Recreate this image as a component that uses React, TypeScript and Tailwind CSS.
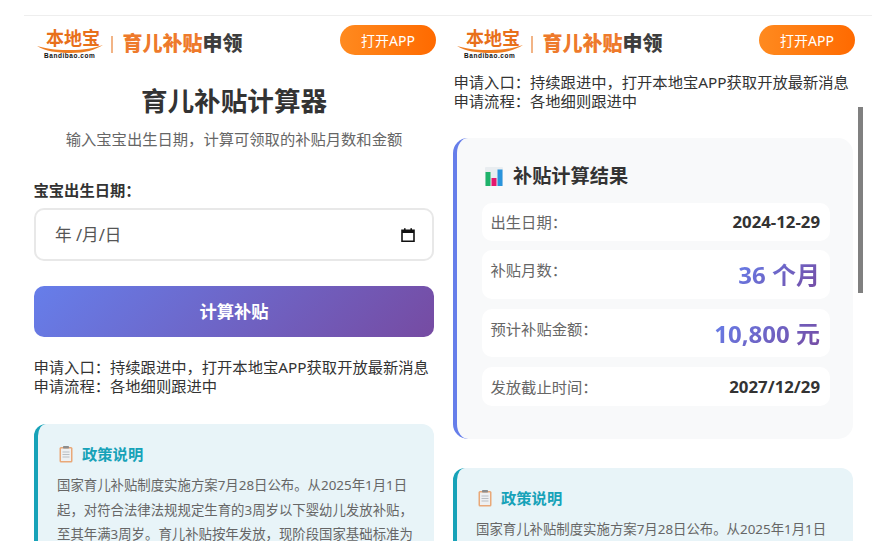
function Logo() {
  return (
    <div className="flex items-center">
      <div className="relative w-[68px] h-[36px] shrink-0">
        <div className="absolute left-[9px] top-[1px] text-[18px] leading-[26px] font-bold text-[#e8701a] whitespace-nowrap font-['Liberation_Serif','Noto_Sans_CJK_SC',serif]">
          本地宝
        </div>
        <svg className="absolute left-0 top-[14px]" width="68" height="16" viewBox="0 0 68 16">
          <path d="M0 7 C14 11 22 11 34 11 C46 11 58 9 66 6 C58 11 48 14 34 14 C20 14 8 12 0 7 Z" fill="#ee7d22" />
        </svg>
        <div className="absolute left-[7px] top-[27px] text-[6.5px] leading-[8px] font-bold text-[#111] tracking-[0.55px] whitespace-nowrap font-['Liberation_Sans',sans-serif]">
          Bandibao.com
        </div>
      </div>
      <div className="w-[1.5px] h-[17px] bg-[#f2b486] ml-[6px] mr-[10px] mt-[2px]" />
      <div className="text-[20px] leading-[26px] font-black whitespace-nowrap mt-[1px]">
        <span className="text-[#ee7a2b]">育儿补贴</span>
        <span className="text-[#3d3d3d]">申领</span>
      </div>
    </div>
  );
}

function Header() {
  return (
    <div className="flex items-center justify-between h-[50px] pl-[13px] pr-[8px] pt-[4px]">
      <Logo />
      <div className="flex items-center justify-center w-[96px] h-[30px] -mt-[6px] rounded-full bg-[linear-gradient(90deg,#ff8a1f,#ff6a00)] text-white text-[14px]">
        打开APP
      </div>
    </div>
  );
}

function Info() {
  return (
    <div className="text-[15.3px] leading-[19px] text-[#333] whitespace-nowrap -ml-[0.5px]">
      <div>申请入口：持续跟进中，打开本地宝APP获取开放最新消息</div>
      <div>申请流程：各地细则跟进中</div>
    </div>
  );
}

function ClipIcon() {
  return (
    <svg width="14" height="17" viewBox="0 0 14 17" className="shrink-0">
      <rect x="0.5" y="1" width="13" height="15.5" rx="1.5" fill="#e9a878" />
      <rect x="2" y="2.5" width="10" height="12.5" fill="#eef0f2" />
      <rect x="4" y="0" width="6" height="2.5" rx="0.7" fill="#8d8d8d" />
      <path d="M3.5 6h7M3.5 8.5h7M3.5 11h7" stroke="#b9bec4" strokeWidth="1" />
    </svg>
  );
}

function ChartIcon() {
  return (
    <svg width="18" height="19" viewBox="0 0 18 19" className="shrink-0">
      <rect x="0" y="0" width="18" height="19" rx="1" fill="#e9edf0" />
      <rect x="0.5" y="5" width="5" height="14" fill="#1fb36b" />
      <rect x="6.5" y="11" width="5" height="8" fill="#e5176e" />
      <rect x="12.5" y="2.5" width="5" height="16.5" fill="#2a94dc" />
    </svg>
  );
}

function Policy({ lines }: { lines: string[] }) {
  return (
    <div className="bg-[#e8f4f8] border-l-4 border-[#17a2b8] rounded-[12px] pl-[19px] pr-[16px] pt-[19px] pb-[16px]">
      <div className="flex items-center gap-[9px] h-[22px] pl-[2px]">
        <ClipIcon />
        <div className="text-[15.3px] font-bold text-[#17a2b8]">政策说明</div>
      </div>
      <div className="mt-[8px] text-[13.4px] leading-[24.6px] text-[#666] whitespace-nowrap">
        {lines.map((l) => (
          <div key={l}>{l}</div>
        ))}
      </div>
    </div>
  );
}

function Row({ label, value, big, h }: { label: string; value: string; big?: boolean; h: string }) {
  return (
    <div className={`flex justify-between bg-white rounded-[10px] pl-[9px] pr-[10px] ${h} ${big ? "items-start pt-[9px]" : "items-center"}`}>
      <span className={`text-[15.3px] leading-[20px] text-[#666] -ml-[0.5px] ${big ? "mt-[1px]" : ""}`}>{label}</span>
      {big ? (
        <span className="text-[24px] leading-[32px] font-bold bg-[linear-gradient(135deg,#667eea,#764ba2)] bg-clip-text text-transparent">
          {value}
        </span>
      ) : (
        <span className="text-[16.8px] leading-[22px] font-bold text-[#333]">{value}</span>
      )}
    </div>
  );
}

export default function App() {
  return (
    <div className="relative h-[541px] w-[896px] overflow-hidden bg-white font-['Noto_Sans','Noto_Sans_CJK_SC',sans-serif]">
      <div className="h-[16px]" />
      <div className="mx-[24px] h-[1px] bg-[#eeeeee] -mt-[1px]" />
      <div className="flex ml-[24px] w-[839px]">
        <div className="w-[420px] shrink-0">
          <Header />
          <div className="pl-[10px] pr-[10px]">
            <h1 className="text-center text-[26.6px] leading-[36px] font-bold text-[#333] mt-[17px]">育儿补贴计算器</h1>
            <p className="text-center text-[15.3px] leading-[20px] text-[#666] mt-[10px]">输入宝宝出生日期，计算可领取的补贴月数和金额</p>
            <div className="text-[15.3px] leading-[20px] font-bold text-[#333] mt-[31px] -ml-[0.5px]">宝宝出生日期：</div>
            <div className="flex items-center justify-between h-[53px] mt-[8px] border-2 border-[#e8e8e8] rounded-[10px] pl-[19px] pr-[16px]">
              <span className="text-[16.6px] text-[#555] pt-[2px]">年 /月/日</span>
              <svg width="16" height="16" viewBox="0 0 16 16">
                <path d="M2 3.2h12v11H2z" fill="none" stroke="#111" strokeWidth="1.6" />
                <path d="M2 3h12v3H2zM4 1.3h1.6V3H4zM10.4 1.3H12V3h-1.6z" fill="#111" />
              </svg>
            </div>
            <div className="flex items-center justify-center h-[51px] mt-[25px] rounded-[10px] bg-[linear-gradient(135deg,#667eea,#764ba2)] text-white text-[17.3px] font-bold">
              计算补贴
            </div>
            <div className="mt-[21px]">
              <Info />
            </div>
            <div className="mt-[28px]">
              <Policy
                lines={[
                  "国家育儿补贴制度实施方案7月28日公布。从2025年1月1日",
                  "起，对符合法律法规规定生育的3周岁以下婴幼儿发放补贴，",
                  "至其年满3周岁。育儿补贴按年发放，现阶段国家基础标准为",
                ]}
              />
            </div>
          </div>
        </div>
        <div className="w-[419px] shrink-0">
          <Header />
          <div className="pl-[9px] pr-[10px] mt-[7px]">
            <div className="pl-[1px]">
              <Info />
            </div>
            <div className="mt-[27px] bg-[#f8f9fa] border-l-4 border-[#667eea] rounded-[15px] pl-[25px] pr-[23px] pt-[25px] pb-[33px] h-[301px]">
              <div className="flex items-center gap-[10px] h-[26px] pl-[3px]">
                <ChartIcon />
                <div className="text-[19.2px] font-bold text-[#333]">补贴计算结果</div>
              </div>
              <div className="flex flex-col mt-[14px]">
                <Row h="h-[38px]" label="出生日期：" value="2024-12-29" />
                <div className="h-[9px]" />
                <Row h="h-[49px]" label="补贴月数：" value="36 个月" big />
                <div className="h-[10px]" />
                <Row h="h-[48px]" label="预计补贴金额：" value="10,800 元" big />
                <div className="h-[10px]" />
                <Row h="h-[39px]" label="发放截止时间：" value="2027/12/29" />
              </div>
            </div>
            <div className="mt-[29px]">
              <Policy lines={["国家育儿补贴制度实施方案7月28日公布。从2025年1月1日"]} />
            </div>
          </div>
        </div>
      </div>
      <div className="absolute left-[857.5px] top-[107px] w-[5.5px] h-[186px] bg-[#808080]" />
    </div>
  );
}
